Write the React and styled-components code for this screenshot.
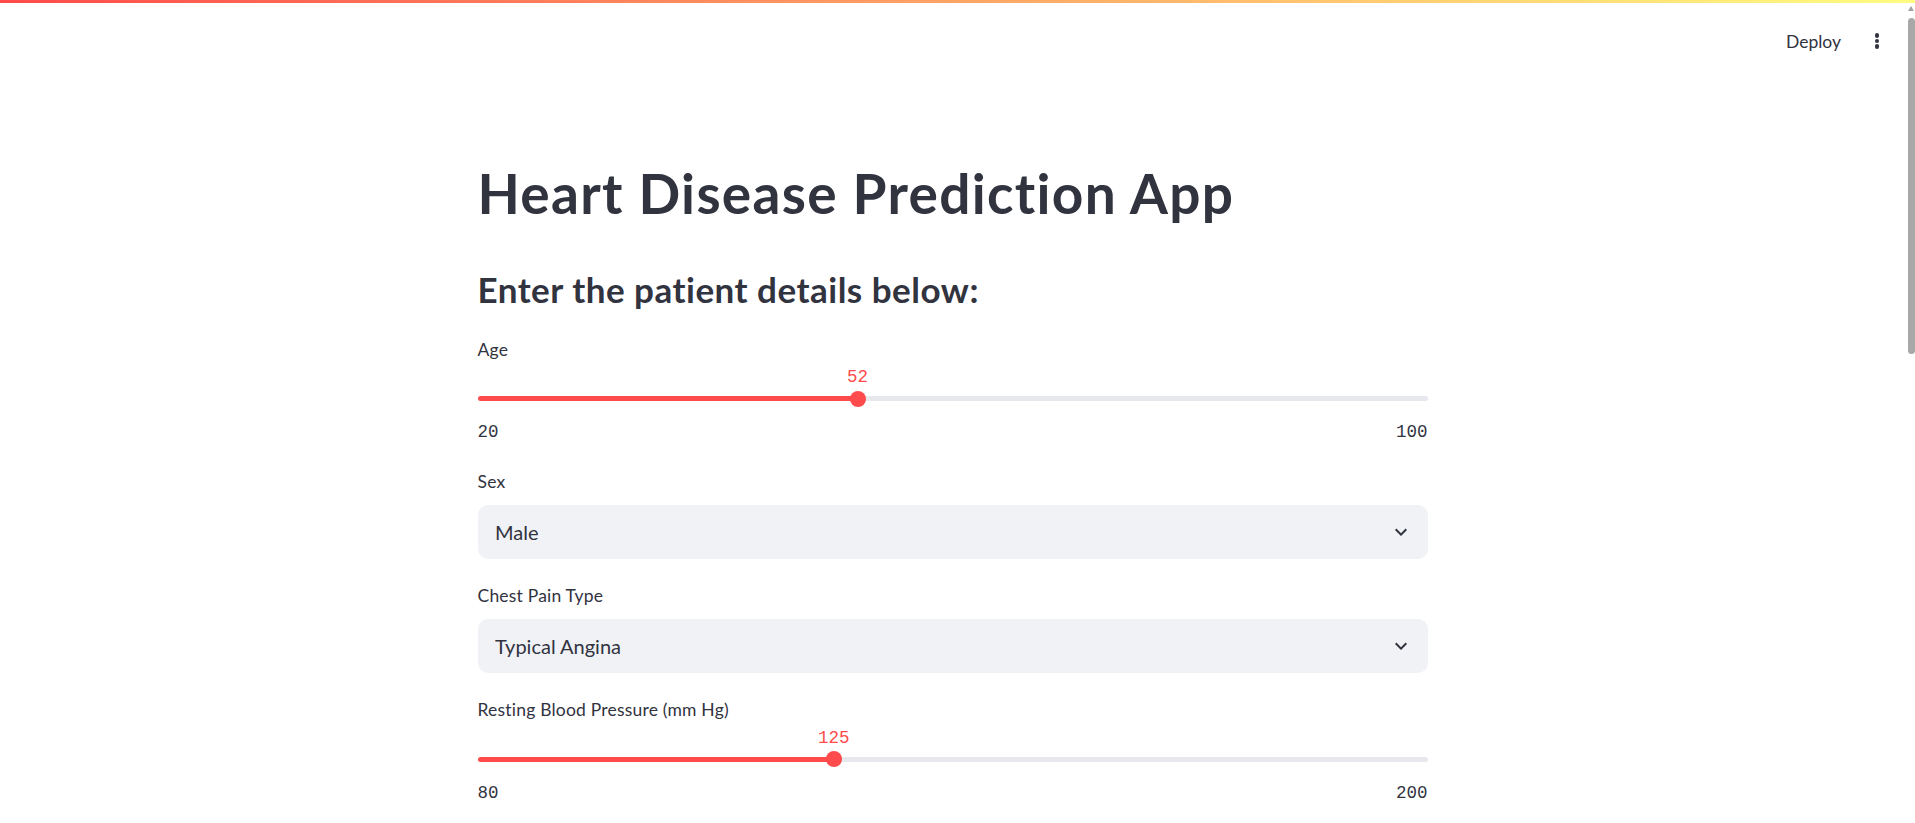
import React from "react";
import styled, { createGlobalStyle } from "styled-components";

const GlobalStyle = createGlobalStyle`
  html, body {
    margin: 0;
    padding: 0;
    background: #ffffff;
    overflow: hidden;
  }
  body {
    font-family: Lato, "Noto Sans", "Liberation Sans", sans-serif;
    color: #31333f;
  }
  * { box-sizing: border-box; }
`;

const Decoration = styled.div`
  height: 3px;
  background: linear-gradient(90deg, #ff4b4b, #fffd80);
`;

const Header = styled.header`
  height: 76px;
  display: flex;
  justify-content: flex-end;
  align-items: center;
  gap: 4px;
  padding-right: 18px;
`;

const DeployButton = styled.button`
  border: none;
  background: transparent;
  font-family: inherit;
  font-size: 17.5px;
  line-height: 40px;
  padding: 0 12px;
  margin-top: 2px;
  color: #31333f;
  cursor: pointer;
`;

const MenuButton = styled.button`
  width: 40px;
  height: 40px;
  border: none;
  background: transparent;
  display: flex;
  flex-direction: column;
  align-items: center;
  justify-content: center;
  gap: 1.4px;
  padding: 0;
  cursor: pointer;
`;

const Dot = styled.span`
  width: 4.2px;
  height: 4.2px;
  border-radius: 50%;
  background: #31333f;
`;

const Content = styled.div`
  display: flex;
  justify-content: center;
  padding-right: 10px;
`;

const Main = styled.main`
  width: 950px;
  padding-top: 81px;
  display: flex;
  flex-direction: column;
`;

const Title = styled.h1`
  margin: 0;
  font-size: 55px;
  line-height: 66px;
  font-weight: 700;
  letter-spacing: 1.3px;
  color: #31333f;
`;

const SubHeading = styled.h2`
  margin: 41.5px 0 0;
  font-size: 35px;
  line-height: 42px;
  font-weight: 700;
  letter-spacing: 0.5px;
  color: #31333f;
`;

const Form = styled.div`
  margin-top: 24.5px;
  display: flex;
  flex-direction: column;
  gap: 22px;
`;

const Field = styled.div`
  display: flex;
  flex-direction: column;
  padding-bottom: ${(p) => (p.$slider ? "3px" : "0")};
`;

const Label = styled.label`
  height: 30px;
  display: flex;
  align-items: center;
  font-size: 17.5px;
  letter-spacing: 0.2px;
  color: #31333f;
  margin-bottom: ${(p) => (p.$gap ? `${p.$gap}px` : "0")};
`;

const TrackArea = styled.div`
  margin-top: 29.5px;
  height: 10px;
  display: flex;
  align-items: center;
  position: relative;
`;

const TrackBar = styled.div`
  width: 100%;
  height: 5px;
  border-radius: 3px;
`;

const Thumb = styled.div`
  position: absolute;
  top: 50%;
  width: 16px;
  height: 16px;
  border-radius: 50%;
  background: #ff4b4b;
  transform: translate(-50%, -50%);
`;

const ThumbValue = styled.div`
  position: absolute;
  bottom: calc(100% + 4px);
  left: 50%;
  transform: translateX(-50%);
  font-family: "Liberation Mono", "DejaVu Sans Mono", monospace;
  font-size: 17.5px;
  line-height: 17.5px;
  color: #ff4b4b;
  white-space: nowrap;
`;

const Ticks = styled.div`
  margin-top: 20.5px;
  display: flex;
  justify-content: space-between;
  font-family: "Liberation Mono", "DejaVu Sans Mono", monospace;
  font-size: 17.5px;
  line-height: 17.5px;
  color: #31333f;
`;

const Select = styled.div`
  height: 54px;
  border-radius: 10px;
  background: #f0f2f6;
  display: flex;
  align-items: center;
  justify-content: space-between;
  padding: 0 15px 0 17.5px;
  font-size: 20px;
  color: #31333f;
`;

const ScrollTrack = styled.div`
  position: fixed;
  top: 0;
  right: 0;
  width: 8px;
  height: 100vh;
  display: flex;
  flex-direction: column;
  align-items: center;
`;

const ScrollArrow = styled.div`
  margin-top: 6px;
  width: 0;
  height: 0;
  border-left: 3.5px solid transparent;
  border-right: 3.5px solid transparent;
  border-bottom: 5px solid #a3a3a3;
`;

const ScrollThumb = styled.div`
  margin-top: 7px;
  width: 7px;
  height: 336px;
  border-radius: 4px;
  background: #a8a8a8;
`;

function Chevron() {
  return (
    <svg width="24" height="24" viewBox="0 0 24 24" aria-hidden="true">
      <path d="M16.59 8.59L12 13.17 7.41 8.59 6 10l6 6 6-6z" fill="#31333f" />
    </svg>
  );
}

function Slider({ label, min, max, value }) {
  const pct = ((value - min) / (max - min)) * 100;
  return (
    <Field $slider>
      <Label>{label}</Label>
      <TrackArea>
        <TrackBar
          style={{
            background: `linear-gradient(to right, #ff4b4b ${pct}%, #e6e8ee ${pct}%)`,
          }}
        />
        <Thumb style={{ left: `${pct}%` }}>
          <ThumbValue>{value}</ThumbValue>
        </Thumb>
      </TrackArea>
      <Ticks>
        <span>{min}</span>
        <span>{max}</span>
      </Ticks>
    </Field>
  );
}

function SelectBox({ label, value }) {
  return (
    <Field>
      <Label $gap={8}>{label}</Label>
      <Select>
        <span>{value}</span>
        <Chevron />
      </Select>
    </Field>
  );
}

export default function App() {
  return (
    <>
      <GlobalStyle />
      <Decoration />
      <Header>
        <DeployButton>Deploy</DeployButton>
        <MenuButton aria-label="menu">
          <Dot />
          <Dot />
          <Dot />
        </MenuButton>
      </Header>
      <Content>
        <Main>
          <Title>Heart Disease Prediction App</Title>
          <SubHeading>Enter the patient details below:</SubHeading>
          <Form>
            <Slider label="Age" min={20} max={100} value={52} />
            <SelectBox label="Sex" value="Male" />
            <SelectBox label="Chest Pain Type" value="Typical Angina" />
            <Slider label="Resting Blood Pressure (mm Hg)" min={80} max={200} value={125} />
          </Form>
        </Main>
      </Content>
      <ScrollTrack>
        <ScrollArrow />
        <ScrollThumb />
      </ScrollTrack>
    </>
  );
}
